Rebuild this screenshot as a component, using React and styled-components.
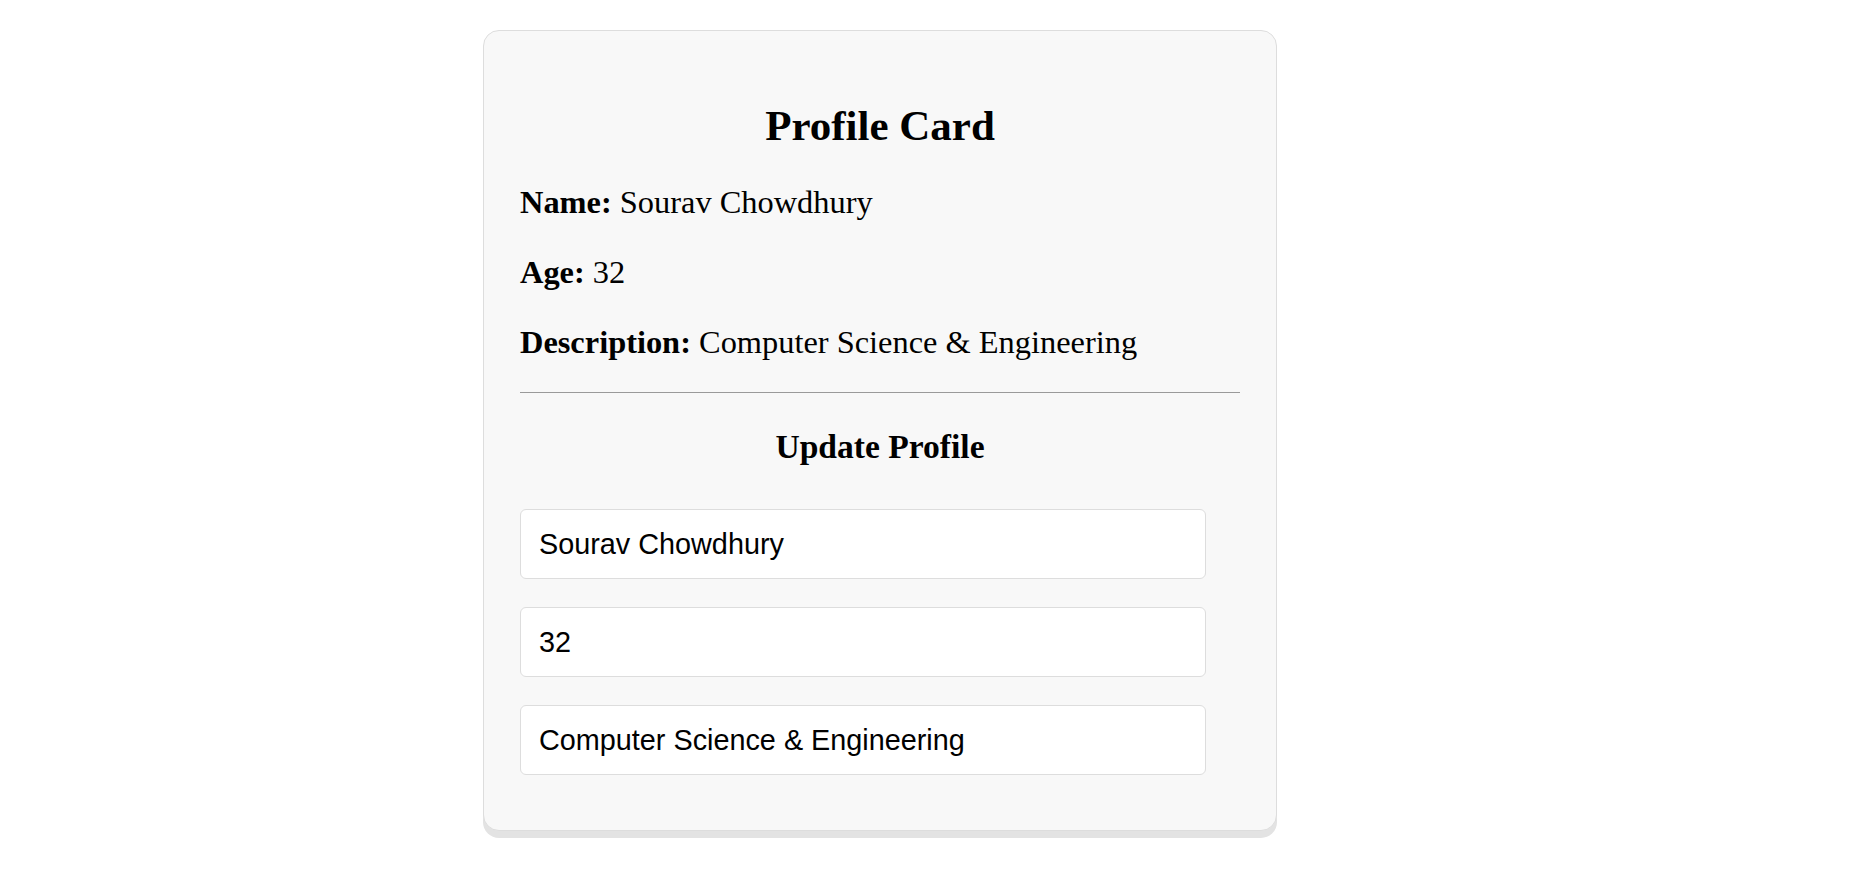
import React, { useState } from 'react';
import styled, { createGlobalStyle } from 'styled-components';

const GlobalStyle = createGlobalStyle`
  html, body {
    margin: 0;
    padding: 0;
    background: #fff;
  }
  body {
    font-family: "Liberation Serif", "Times New Roman", serif;
    color: #000;
  }
`;

const Page = styled.div`
  padding: 30px 0 40px 483px;
`;

const Card = styled.div`
  box-sizing: border-box;
  width: 794px;
  padding: 40px 36px 55px;
  background: #f8f8f8;
  border: 1px solid #dddddd;
  border-radius: 16px;
  box-shadow: 0 7px 0 #e3e3e3;
`;

const Title = styled.h1`
  margin: 30px 0 31px;
  font-size: 43px;
  line-height: 50px;
  font-weight: bold;
  text-align: center;
`;

const Field = styled.p`
  margin: 0 0 30px;
  font-size: 32.4px;
  line-height: 40px;

  &:last-of-type {
    margin-bottom: 0;
  }

  strong {
    font-weight: bold;
  }
`;

const Divider = styled.hr`
  margin: 30px 0 0;
  height: 0;
  border: 0;
  border-top: 1px solid #9a9a9a;
`;

const SubTitle = styled.h2`
  margin: 34px 0 42px;
  font-size: 33.6px;
  line-height: 40px;
  font-weight: bold;
  text-align: center;
`;

const Form = styled.div`
  display: flex;
  flex-direction: column;
  gap: 28px;
`;

const Input = styled.input`
  box-sizing: border-box;
  width: 686px;
  height: 70px;
  padding: 0 18px;
  background: #fff;
  border: 1px solid #dddddd;
  border-radius: 6px;
  font-family: "Liberation Sans", Arial, sans-serif;
  font-size: 28.8px;
  color: #000;
  outline: none;
`;

export default function App() {
  const [profile, setProfile] = useState({
    name: 'Sourav Chowdhury',
    age: '32',
    description: 'Computer Science & Engineering',
  });

  const update = (key) => (e) => setProfile({ ...profile, [key]: e.target.value });

  return (
    <Page>
      <GlobalStyle />
      <Card>
        <Title>Profile Card</Title>
        <Field><strong>Name:</strong> {profile.name}</Field>
        <Field><strong>Age:</strong> {profile.age}</Field>
        <Field><strong>Description:</strong> {profile.description}</Field>
        <Divider />
        <SubTitle>Update Profile</SubTitle>
        <Form>
          <Input type="text" value={profile.name} onChange={update('name')} />
          <Input type="number" value={profile.age} onChange={update('age')} />
          <Input type="text" value={profile.description} onChange={update('description')} />
        </Form>
      </Card>
    </Page>
  );
}
